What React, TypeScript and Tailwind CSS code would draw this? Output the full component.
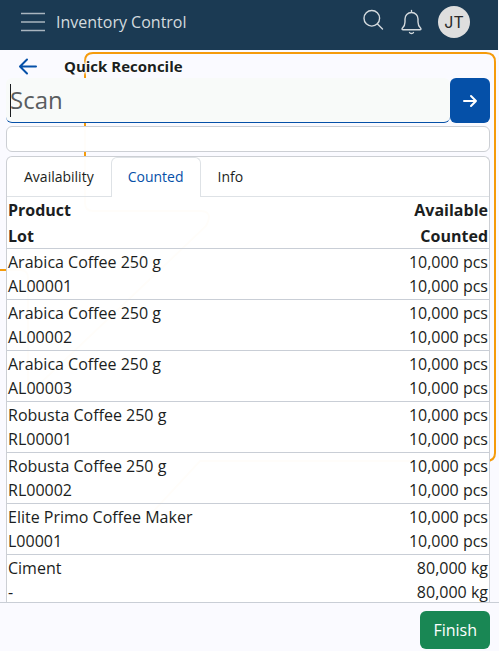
import { useState } from "react";

type Item = { product: string; lot: string; available: string; counted: string };

const items: Item[] = [
  { product: "Arabica Coffee 250 g", lot: "AL00001", available: "10,000 pcs", counted: "10,000 pcs" },
  { product: "Arabica Coffee 250 g", lot: "AL00002", available: "10,000 pcs", counted: "10,000 pcs" },
  { product: "Arabica Coffee 250 g", lot: "AL00003", available: "10,000 pcs", counted: "10,000 pcs" },
  { product: "Robusta Coffee 250 g", lot: "RL00001", available: "10,000 pcs", counted: "10,000 pcs" },
  { product: "Robusta Coffee 250 g", lot: "RL00002", available: "10,000 pcs", counted: "10,000 pcs" },
  { product: "Elite Primo Coffee Maker", lot: "L00001", available: "10,000 pcs", counted: "10,000 pcs" },
  { product: "Ciment", lot: "-", available: "80,000 kg", counted: "80,000 kg" },
];

const tabs = ["Availability", "Counted", "Info"];

/* Orange circuit line that runs behind the page */
function Backdrop() {
  return (
    <svg className="pointer-events-none absolute top-0 left-0 -z-10 h-[651px] w-[499px]" fill="none" stroke="#f59b0b" strokeWidth="2" aria-hidden="true">
      <path d="M0 270H20Q28 270 28 278V395L206 226Q214 211 200 211H93Q85 211 85 203V61Q85 53 93 53H486Q495 53 495 62V453Q495 461 486 461H200L150 515" />
    </svg>
  );
}

function Header() {
  return (
    <header className="mr-px flex h-[50px] shrink-0 items-center bg-[#1b3a53] pr-7 pb-1.5 pl-5 text-[#d4dade]">
      <button type="button" aria-label="Menu">
        <svg className="block" width="26" height="20" viewBox="0 0 26 20" stroke="#a9b5bf" strokeWidth="1.5" aria-hidden="true">
          <path d="M1 1.5h24M1 10h24M1 18.5h24" />
        </svg>
      </button>
      <span className="ml-2.5 grow text-base">Inventory Control</span>
      <button type="button" aria-label="Search" className="pb-1">
        <svg className="block" width="22" height="22" viewBox="0 0 22 22" fill="none" stroke="currentColor" strokeWidth="1.4" strokeLinecap="round" aria-hidden="true">
          <circle cx="9.8" cy="9.3" r="7.8" />
          <path d="M15.500 15l5 5" />
        </svg>
      </button>
      <button type="button" aria-label="Notifications" className="ml-4">
        <svg className="block" width="22" height="26" viewBox="0 0 22 26" fill="none" stroke="currentColor" strokeWidth="1.4" strokeLinecap="round" strokeLinejoin="round" aria-hidden="true">
          <path d="M11.500 1.500v2M11.500 3.500C7.500 3.500 5 6.500 5 10v3c0 3-1 4.500-2.500 6-.8.9-.6 1.800.7 1.800h16.600c1.300 0 1.500-.9.7-1.800-1.500-1.500-2.500-3-2.500-6v-3C18 6.500 15.500 3.500 11.500 3.500z" />
          <path d="M9.500 23.500c.7 1.300 3.300 1.300 4 0" />
        </svg>
      </button>
      <button type="button" aria-label="Account JT" className="ml-4 size-8 rounded-full bg-[#dedede] font-['Inter','Liberation_Sans',sans-serif] text-base text-[#292929]">
        JT
      </button>
    </header>
  );
}

export default function App() {
  const [active, setActive] = useState("Counted");
  return (
    <div className="relative isolate flex h-screen flex-col overflow-hidden bg-[#fafaff] font-['Open_Sans','Noto_Sans',sans-serif] text-[#1b1e21]">
      <Backdrop />
      <Header />
      <main className="flex min-h-0 grow flex-col pr-[9px] pl-1.5">
        <div className="flex h-7 shrink-0 items-center pt-1 pl-3">
          <button type="button" aria-label="Back">
            <svg className="block" width="20" height="18" viewBox="0 0 20 18" fill="none" stroke="#0550a8" strokeWidth="2" strokeLinecap="round" strokeLinejoin="round" aria-hidden="true">
              <path d="M18 9.500H3M9 2.500l-7 7 7 7" />
            </svg>
          </button>
          <h1 className="ml-[26px] text-[15px] font-bold [text-shadow:0_0_2px_#fff,0_0_2px_#fff,0_0_3px_#fff,0_0_3px_#fff,0_0_4px_#fff,0_0_4px_#fff]">Quick Reconcile</h1>
        </div>
        <form className="flex h-[45px] shrink-0" onSubmit={(e) => e.preventDefault()}>
          <div className="relative min-w-0 grow">
            <input
              type="text"
              aria-label="Scan"
              placeholder="Scan"
              className="block h-full w-full rounded-md border-b border-[#0550a8] bg-[#f8faf9] pb-0.5 pl-1 text-2xl outline-none placeholder:text-[#5a5d60]"
            />
            <span className="absolute top-1.5 left-1 h-[33px] w-px bg-[#1b1e21]" />
          </div>
          <button type="submit" aria-label="Submit scan" className="flex w-10 items-center justify-center rounded-md bg-[#0550a8]">
            <svg width="16" height="14" viewBox="0 0 16 14" fill="none" stroke="#fff" strokeWidth="2" strokeLinecap="round" strokeLinejoin="round" aria-hidden="true">
              <path d="M2 7h12M9 2l5 5-5 5" />
            </svg>
          </button>
        </form>
        <div className="mt-[3px] h-[26px] shrink-0 rounded-md border border-[#cccfd4] bg-white/98" />
        <section className="mt-1 flex min-h-0 grow flex-col overflow-hidden rounded-t-md border border-b-0 border-[#cccfd4] bg-white/98">
          <div role="tablist" className="flex h-10 shrink-0 border-b border-[#dee2e6] text-sm">
            {tabs.map((tab) => (
              <button
                key={tab}
                type="button"
                role="tab"
                aria-selected={tab === active}
                onClick={() => setActive(tab)}
                className={
                  tab === active
                    ? "-mb-px rounded-t-md border border-b-0 border-[#dee2e6] bg-white px-4 pb-px text-[#0550a8]"
                    : "px-[17px]"
                }
              >
                {tab}
              </button>
            ))}
          </div>
          <div className="min-h-0 grow overflow-hidden">
            <table className="w-full border-separate border-spacing-0 text-base leading-6">
              <thead>
                <tr className="font-bold">
                  <th scope="col" className="border-b border-[#c9ced6] px-px pt-px text-left">
                    <div className="mb-0.5">Product</div>
                    <div>Lot</div>
                  </th>
                  <th scope="col" className="border-b border-[#c9ced6] px-px pt-px text-right">
                    <div className="mb-0.5">Available</div>
                    <div>Counted</div>
                  </th>
                </tr>
              </thead>
              <tbody>
                {items.map((item) => (
                  <tr key={item.product + item.lot}>
                    <td className="border-b border-[#c9ced6] p-px">
                      <div>{item.product}</div>
                      <div>{item.lot}</div>
                    </td>
                    <td className="border-b border-[#c9ced6] p-px text-right">
                      <div>{item.available}</div>
                      <div>{item.counted}</div>
                    </td>
                  </tr>
                ))}
              </tbody>
            </table>
          </div>
        </section>
      </main>
      <footer className="flex h-[49px] shrink-0 items-start justify-end border-t border-[#c9ced6] bg-[#fafaff] pt-2 pr-[9px]">
        <button type="button" className="h-[38px] rounded-md bg-[#198754] px-[13px] text-base text-white">
          Finish
        </button>
      </footer>
    </div>
  );
}
